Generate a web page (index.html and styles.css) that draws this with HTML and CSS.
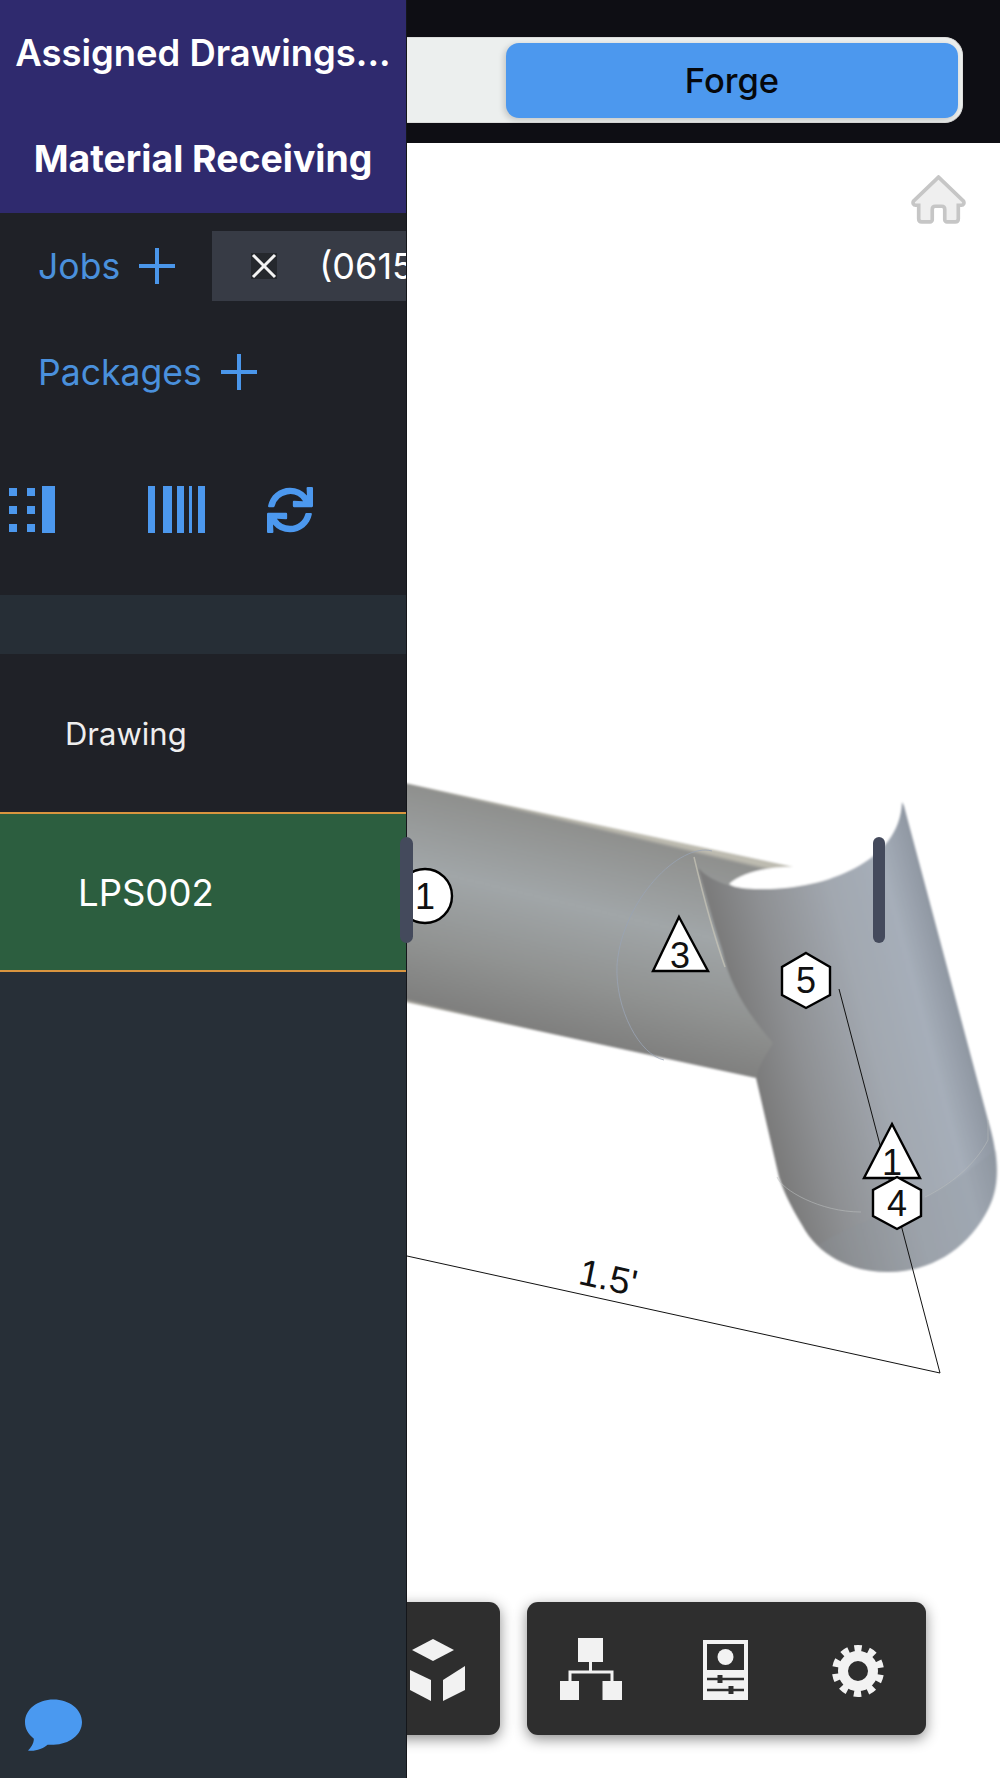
FILE: index.html
```html
<!DOCTYPE html>
<html lang="en">
<head>
<meta charset="utf-8">
<title>Material Receiving</title>
<link rel="stylesheet" href="styles.css">
</head>
<body>
<div class="app">
  <aside class="sidebar">
    <header class="sidebar-head">
      <div class="head-row">Assigned Drawings...</div>
      <div class="head-row head-active">Material Receiving</div>
    </header>
    <div class="filter-row">
      <span class="filter-label">Jobs</span>
      <svg class="plus" viewBox="0 0 36 36"><path d="M18 0V36M0 18H36"/></svg>
      <div class="job-tab">
        <span class="job-close"><svg viewBox="0 0 26 26"><path d="M2 2L24 24M24 2L2 24"/></svg></span>
        <span class="job-name">(0615</span>
      </div>
    </div>
    <div class="filter-row">
      <span class="filter-label">Packages</span>
      <svg class="plus" viewBox="0 0 36 36"><path d="M18 0V36M0 18H36"/></svg>
    </div>
    <div class="tools">
      <svg class="tool-grid" viewBox="0 0 47 48">
        <rect x="0" y="2" width="8" height="8"/><rect x="18" y="2" width="8" height="8"/>
        <rect x="0" y="20" width="8" height="8"/><rect x="18" y="20" width="8" height="8"/>
        <rect x="0" y="38" width="8" height="8"/><rect x="18" y="38" width="8" height="8"/>
        <rect x="33" y="0" width="13" height="47"/>
      </svg>
      <svg class="tool-barcode" viewBox="0 0 57 48">
        <rect x="0" y="0" width="7" height="47"/><rect x="15" y="0" width="9" height="47"/>
        <rect x="29" y="0" width="7" height="47"/><rect x="41" y="0" width="3" height="47"/>
        <rect x="50" y="0" width="7" height="47"/>
      </svg>
      <svg class="tool-sync" viewBox="0 0 512 512"><path d="M440.65 12.57l4 82.77A247.16 247.16 0 0 0 255.83 8C134.73 8 33.91 94.92 12.29 209.82A12 12 0 0 0 24.09 224h49.05a12 12 0 0 0 11.67-9.26 175.91 175.91 0 0 1 317-56.94l-101.46-4.86a12 12 0 0 0-12.57 12v47.41a12 12 0 0 0 12 12H500a12 12 0 0 0 12-12V12a12 12 0 0 0-12-12h-47.37a12 12 0 0 0-11.98 12.57zM255.83 432a175.61 175.61 0 0 1-146-77.8l101.8 4.87a12 12 0 0 0 12.57-12v-47.4a12 12 0 0 0-12-12H12a12 12 0 0 0-12 12V500a12 12 0 0 0 12 12h47.35a12 12 0 0 0 12-12.6l-4.15-82.57A247.17 247.17 0 0 0 255.83 504c121.11 0 221.93-86.92 243.55-201.82a12 12 0 0 0-11.8-14.18h-49.05a12 12 0 0 0-11.67 9.26A175.86 175.86 0 0 1 255.83 432z"/></svg>
    </div>
    <div class="band"></div>
    <div class="table-head">Drawing</div>
    <div class="table-row">LPS002</div>
    <div class="sidebar-rest">
      <svg class="chat" viewBox="0 0 58 54"><path d="M29 0C13 0 0 10 0 23C0 30 3 35 9 40C9 45 6 49 3 52C11 53 18 50 23 46C25 46 27 46 29 46C45 46 58 36 58 23C58 10 45 0 29 0Z"/></svg>
    </div>
    <span class="scroll-thumb"></span>
  </aside>

  <main class="viewer">
    <div class="topbar">
      <div class="segment">
        <button class="segment-btn" type="button">Forge</button>
      </div>
    </div>
    <div class="canvas">
      <svg class="model" viewBox="407 143 593 1635">
        <defs>
          <linearGradient id="pipeA" gradientUnits="userSpaceOnUse" x1="520" y1="808" x2="470" y2="1018">
            <stop offset="0" stop-color="#bdbbb0"/>
            <stop offset=".018" stop-color="#8f908e"/>
            <stop offset=".38" stop-color="#a1a6a8"/>
            <stop offset=".72" stop-color="#909291"/>
            <stop offset=".98" stop-color="#7f7f7e"/>
            <stop offset="1" stop-color="#bdbbb0"/>
          </linearGradient>
          <linearGradient id="pipeB" gradientUnits="userSpaceOnUse" x1="756" y1="1078" x2="970" y2="1022">
            <stop offset="0" stop-color="#7b7b7b"/>
            <stop offset=".22" stop-color="#8e9093"/>
            <stop offset=".55" stop-color="#a2a8b0"/>
            <stop offset=".8" stop-color="#a6aeb9"/>
            <stop offset=".97" stop-color="#8e96a1"/>
            <stop offset="1" stop-color="#c9c6b8"/>
          </linearGradient>
          <filter id="soft" x="-5%" y="-5%" width="110%" height="110%"><feGaussianBlur stdDeviation="1"/></filter>
        </defs>
        <g filter="url(#soft)">
          <path class="pipe-a" d="M400 782L798 868L775 1045L756 1078L400 1001Z"/>
          <path class="lens" d="M729 884C745 870 775 866 800 867L835 880L760 900Z"/>
          <path class="pipe-b" d="M698 868C715 885 740 890 765 889C825 889 900 862 902 802L904 806L988 1120C1000 1160 1000 1190 985 1215C965 1250 930 1272 888 1272C850 1272 818 1255 802 1225C790 1205 783 1190 779 1177L756 1078C760 1062 768 1052 773 1043C745 1010 730 985 722 950C712 920 705 890 698 868Z"/>
          <path class="cap-shade" d="M925 1197C950 1185 975 1165 996 1150C1000 1175 998 1195 985 1215C965 1250 930 1272 888 1272C860 1272 835 1262 818 1245C850 1225 890 1212 925 1197Z"/>
        </g>
        <path class="crease" d="M694 857C703 895 712 930 725 967"/>
        <path class="seam" d="M712 851C680 842 622 900 617 965C615 1010 640 1055 664 1060"/>
        <path class="seam-light" d="M777 1177C782 1190 820 1212 861 1212M925 1197C950 1185 975 1165 988 1140L988 1120"/>
        <path class="leader" d="M839 989L940 1373L407 1256"/>
        <circle class="tag" cx="425" cy="896" r="27"/>
        <text class="tag-text" x="425" y="909">1</text>
        <path class="tag" d="M679 917L708 971H653Z"/>
        <text class="tag-text" x="680" y="968">3</text>
        <path class="tag" d="M806 953L830 967V995L806 1008L782 995V967Z"/>
        <text class="tag-text" x="806" y="993">5</text>
        <path class="tag" d="M892 1124L920 1178H864Z"/>
        <text class="tag-text" x="892" y="1175">1</text>
        <path class="tag" d="M897 1177L921 1190V1216L897 1229L873 1216V1190Z"/>
        <text class="tag-text" x="897" y="1216">4</text>
        <text class="dim-text" transform="translate(579 1284) rotate(12.5) skewX(12)">1.5'</text>
      </svg>

      <svg class="home" viewBox="0 0 54 47"><path d="M27 2L51 25C52 27 51 29 49 29H46V42C46 44 45 45 43 45H35C34 45 33 44 33 43V33C33 31 32 30 30 30H24C22 30 21 31 21 33V43C21 44 20 45 19 45H11C9 45 8 44 8 42V29H5C3 29 2 27 3 25Z"/></svg>

      <div class="dock">
        <div class="dock-box dock-left">
          <svg class="cube" viewBox="0 0 66 62"><path d="M33 0L54 11L33 22L12 11Z"/><path d="M10 31L31 41V62L10 51Z"/><path d="M43 41L65 27V51L43 62Z"/></svg>
        </div>
        <div class="dock-box dock-right">
          <svg class="tree" viewBox="0 0 62 62">
            <rect x="18" y="0" width="25" height="24"/>
            <rect x="0" y="43" width="19" height="19"/>
            <rect x="42.500" y="43" width="19.500" height="19"/>
            <path class="tree-link" d="M30.500 24V34M10 43V34H52V43"/>
          </svg>
          <svg class="panel" viewBox="0 0 45 60">
            <path d="M0 0H45V60H0Z"/>
            <rect class="panel-dark" x="4" y="4" width="37" height="26"/>
            <circle cx="22.500" cy="17" r="8"/>
            <path class="panel-line" d="M4 39H41M4 50H41"/>
            <rect class="panel-knob" x="14.500" y="35" width="5" height="8"/>
            <rect class="panel-knob" x="25.500" y="46" width="5" height="8"/>
          </svg>
          <svg class="gear" viewBox="0 0 54 54">
            <circle class="gear-teeth" cx="27" cy="27" r="22" transform="rotate(-99 27 27)"/>
            <circle class="gear-ring" cx="27" cy="27" r="15"/>
          </svg>
        </div>
      </div>
      <span class="scroll-thumb-right"></span>
    </div>
  </main>
</div>
</body>
</html>
```
FILE: styles.css
```css
* { box-sizing: border-box; }
html, body { margin: 0; padding: 0; }
body { font-family: Inter, "Liberation Sans", sans-serif; background: #fff; }

.app {
  display: flex;
  width: 1000px;
  height: 1778px;
  overflow: hidden;
}

/* Sidebar */
.sidebar {
  position: relative;
  z-index: 2;
  display: flex;
  flex: 0 0 407px;
  flex-direction: column;
  width: 407px;
  height: 100%;
  background: #272f37;
  border-right: 1px solid #14161a;
}
.sidebar-head {
  display: flex;
  flex-direction: column;
  height: 213px;
  background: #2f2a6e;
}
.head-row {
  display: flex;
  flex: 1;
  align-items: center;
  justify-content: center;
  color: #fff;
  font-size: 36.400px;
  font-weight: 600;
  white-space: nowrap;
}
.head-active { padding-bottom: 2px; font-size: 37.400px; font-weight: 700; }
.filter-row {
  display: flex;
  align-items: center;
  height: 106px;
  padding-left: 38px;
  overflow: hidden;
  background: #1f2127;
}
.filter-label { color: #4a90dc; font-size: 35.600px; }
.plus { flex: none; width: 36px; height: 36px; margin-left: 19px; }
.plus path { fill: none; stroke: #4a96ea; stroke-width: 4; }
.job-tab {
  display: flex;
  flex: none;
  align-items: center;
  width: 260px;
  height: 70px;
  margin-left: 37px;
  padding-left: 39px;
  background: #373b45;
  color: #fff;
  font-size: 36px;
  white-space: nowrap;
}
.job-close {
  display: flex;
  width: 26px;
  height: 26px;
  margin-right: 42px;
  background: #25282d;
}
.job-close svg { width: 26px; height: 26px; }
.job-close path { fill: none; stroke: #f4f4f4; stroke-width: 3; }
.tools {
  display: flex;
  align-items: center;
  height: 170px;
  padding-left: 9px;
  background: #1f2127;
}
.tools svg { flex: none; fill: #4c98ee; }
.tool-grid { width: 47px; height: 48px; }
.tool-barcode { width: 57px; height: 48px; margin-left: 92px; }
.tool-sync { width: 46px; height: 46px; margin-left: 62px; }
.band { height: 59px; background: #262e36; }
.table-head {
  display: flex;
  align-items: center;
  height: 158px;
  padding-left: 65px;
  background: #1f2127;
  color: #eee;
  font-size: 31px;
}
.table-row {
  display: flex;
  align-items: center;
  height: 160px;
  padding-top: 2px;
  padding-left: 78px;
  background: #2c5e3f;
  border-top: 2px solid #d9953f;
  border-bottom: 2px solid #d9953f;
  color: #fff;
  font-size: 36.500px;
}
.sidebar-rest {
  flex: 1;
  padding: 727px 0 0 25px;
  background: #272f37;
}
.chat { display: block; width: 57px; height: 54px; fill: #4a99f0; }
.scroll-thumb {
  position: absolute;
  top: 837px;
  left: 400px;
  width: 13px;
  height: 106px;
  border-radius: 7px;
  background: #444a5c;
}

/* Viewer */
.viewer {
  display: flex;
  flex: 1;
  flex-direction: column;
  min-width: 0;
  overflow: hidden;
}
.topbar {
  display: flex;
  flex: 0 0 143px;
  justify-content: flex-end;
  padding: 37px 37px 0 0;
  background: #0e0e14;
}
.segment {
  display: flex;
  flex: none;
  justify-content: flex-end;
  width: 700px;
  height: 86px;
  padding: 5px 4px;
  background: #ecefee;
  border: 1px solid #dcdcdc;
  border-radius: 0 18px 18px 0;
}
.segment-btn {
  width: 452px;
  height: 75px;
  padding: 0;
  background: #4c98ee;
  border: 0;
  border-radius: 13px;
  box-shadow: -2px 2px 6px rgba(0, 0, 0, .18);
  color: #06080c;
  font-family: Inter, "Liberation Sans", sans-serif;
  font-size: 34.500px;
  font-weight: 500;
}
.canvas {
  position: relative;
  flex: 1;
  background: #fff;
}
.model { display: block; width: 593px; height: 1635px; }
.pipe-a { fill: url(#pipeA); }
.pipe-b { fill: url(#pipeB); }
.lens { fill: #fff; }
.cap-shade { fill: #8b929c; opacity: .25; }
.crease { fill: none; stroke: #c9c6b8; stroke-width: 1.500; opacity: .7; }
.seam { fill: none; stroke: #9aa4b4; stroke-width: 1; opacity: .8; }
.seam-light { fill: none; stroke: #b9bcbd; stroke-width: 1; opacity: .6; }
.leader { fill: none; stroke: #111; stroke-width: 1; }
.tag { fill: #fff; stroke: #000; stroke-width: 2.400; }
.tag-text {
  fill: #111;
  font-family: "Liberation Sans", sans-serif;
  font-size: 36px;
  text-anchor: middle;
}
.dim-text {
  fill: #111;
  font-family: "Liberation Sans", sans-serif;
  font-size: 37px;
  font-style: italic;
}
.home {
  position: absolute;
  top: 32px;
  left: 503px;
  width: 57px;
  height: 49px;
  fill: #efefef;
  stroke: #c6c6c6;
  stroke-width: 3.500;
}
.dock {
  position: absolute;
  right: 74px;
  bottom: 43px;
  display: flex;
  gap: 27px;
}
.dock-box {
  display: flex;
  align-items: center;
  height: 133px;
  background: #2e2e2e;
  border-radius: 11px;
  box-shadow: 0 4px 14px rgba(0, 0, 0, .45);
}
.dock-left { width: 130px; padding-left: 30px; }
.dock-right { width: 399px; padding-left: 33px; }
.dock-box svg { flex: none; fill: #f2f2f2; }
.cube { width: 66px; height: 62px; margin-top: 2px; }
.tree { width: 62px; height: 62px; }
.tree-link { fill: none; stroke: #f2f2f2; stroke-width: 3; }
.panel { width: 45px; height: 60px; margin-left: 81px; margin-top: 2px; }
.panel-dark { fill: #2e2e2e; }
.panel-line { fill: none; stroke: #2e2e2e; stroke-width: 2.500; }
.panel-knob { fill: #2e2e2e; }
.gear { width: 54px; height: 54px; margin-left: 83px; margin-top: 4px; }
.gear-teeth { fill: none; stroke: #f2f2f2; stroke-width: 8; stroke-dasharray: 7 6.820; }
.gear-ring { fill: none; stroke: #f2f2f2; stroke-width: 10; }
.scroll-thumb-right {
  position: absolute;
  top: 694px;
  left: 466px;
  width: 12px;
  height: 106px;
  border-radius: 6px;
  background: #444a5c;
}
```
